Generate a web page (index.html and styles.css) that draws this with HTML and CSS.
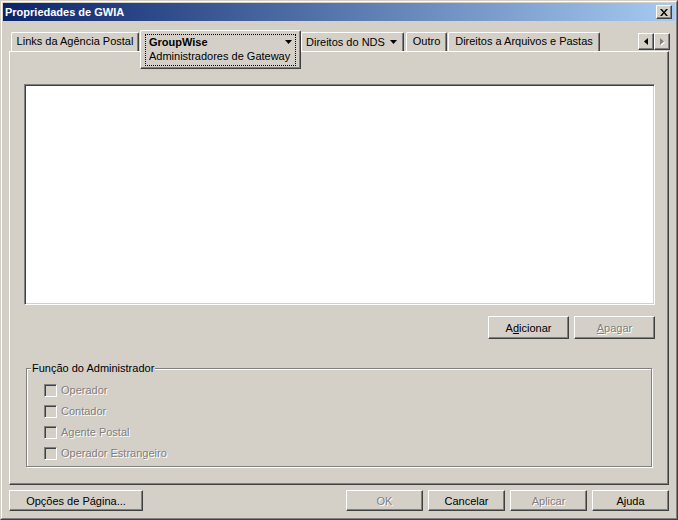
FILE: index.html
```html
<!DOCTYPE html>
<html lang="pt">
<head>
  <meta charset="UTF-8" />
  <title>Propriedades de GWIA</title>
  <link rel="stylesheet" href="styles.css">
</head>
<body>
  <div class="window">
    <div class="frame">
      <div class="titlebar">
        <span class="title">Propriedades de GWIA</span>
        <button class="close" aria-label="Fechar">
          <svg width="8" height="7" viewBox="0 0 8 7"><path d="M0 0H2L4 2.5L6 0H8L5 3.5L8 7H6L4 4.5L2 7H0L3 3.5Z" fill="#000"/></svg>
        </button>
      </div>

      <div class="tabs">
        <div class="tab tab-links">Links da Agência Postal</div>
        <div class="tab tab-active">
          <div class="focus">
            <div class="tab-head">
              <b>GroupWise</b>
              <svg class="arrow" width="7" height="4" viewBox="0 0 7 4"><polygon points="0,0 7,0 3.5,4" fill="#000"/></svg>
            </div>
            <div class="subpage">Administradores de Gateway</div>
          </div>
        </div>
        <div class="tab tab-nds">
          <span>Direitos do NDS</span>
          <svg class="arrow" width="7" height="4" viewBox="0 0 7 4"><polygon points="0,0 7,0 3.5,4" fill="#000"/></svg>
        </div>
        <div class="tab tab-outro">Outro</div>
        <div class="tab tab-dir">Direitos a Arquivos e Pastas</div>
        <div class="tab-scroll">
          <span class="scroll-btn">
            <svg width="4" height="7" viewBox="0 0 4 7"><polygon points="4,0 4,7 0,3.5" fill="#000"/></svg>
          </span>
          <span class="scroll-btn">
            <svg width="5" height="8" viewBox="0 0 5 8"><polygon points="1,1 5,4.5 1,8" fill="#fff"/><polygon points="0,0 4,3.5 0,7" fill="#808080"/></svg>
          </span>
        </div>
      </div>

      <div class="panel">
        <div class="listbox"></div>

        <div class="list-actions">
          <button class="btn">A<u>d</u>icionar</button>
          <button class="btn" disabled><u>A</u>pagar</button>
        </div>

        <fieldset class="group">
          <legend>Função do Administrador</legend>
          <div class="check"><span class="box"></span><span class="off">Operador</span></div>
          <div class="check"><span class="box"></span><span class="off">Contador</span></div>
          <div class="check"><span class="box"></span><span class="off">Agente Postal</span></div>
          <div class="check"><span class="box"></span><span class="off">Operador Estrangeiro</span></div>
        </fieldset>
      </div>

      <div class="footer">
        <button class="btn btn-page">Opções de Pá<u>g</u>ina...</button>
        <button class="btn btn-small" disabled>OK</button>
        <button class="btn btn-small">Cancelar</button>
        <button class="btn btn-small" disabled>Aplicar</button>
        <button class="btn btn-small">Ajuda</button>
      </div>
    </div>
  </div>
</body>
</html>
```

FILE: styles.css
```css
* {
  margin: 0;
  padding: 0;
  box-sizing: border-box;
}

body {
  width: 678px;
  height: 520px;
  overflow: hidden;
  background-color: #d4d0c8;
  color: #000;
  font-family: "Liberation Sans", Arial, sans-serif;
  font-size: 11px;
}

.window {
  width: 678px;
  height: 520px;
  border: 1px solid;
  border-color: #d4d0c8 #404040 #404040 #d4d0c8;
}

.frame {
  height: 100%;
  border: 1px solid;
  border-color: #fff #808080 #808080 #fff;
  padding: 1px;
  display: flex;
  flex-direction: column;
}

.titlebar {
  height: 18px;
  flex: none;
  display: flex;
  align-items: center;
  padding: 0 2px 0 2px;
  background: linear-gradient(to right, #0a246a, #a6caf0);
}

.title {
  flex: 1;
  color: #fff;
  font-weight: bold;
  line-height: 17px;
}

.close {
  width: 16px;
  height: 14px;
  display: flex;
  align-items: center;
  justify-content: center;
  background-color: #d4d0c8;
  border: 1px solid;
  border-color: #fff #404040 #404040 #fff;
  box-shadow: inset -1px -1px #808080;
  margin-right: 1px;
}

.close svg {
  display: block;
}

/* tab strip */
.tabs {
  display: flex;
  align-items: flex-start;
  height: 21px;
  flex: none;
  margin-top: 9px;
  padding: 0 5px 0 8px;
  position: relative;
  z-index: 2;
}

.tab {
  margin-top: 2px;
  height: 19px;
  border: 1px solid;
  border-bottom: 0;
  border-color: #fff #404040 #fff #fff;
  border-radius: 2px 2px 0 0;
  box-shadow: inset -1px 0 #808080;
  line-height: 16px;
  text-align: center;
  white-space: nowrap;
  background-color: #d4d0c8;
}

.tab-links {
  width: 128px;
}

.tab-active {
  width: 161px;
  height: 39px;
  margin-top: 0;
  margin-left: 1px;
  border-bottom: 1px solid #404040;
  box-shadow: inset -1px -1px #808080;
  padding: 3px 4px 2px 4px;
  line-height: 14px;
  text-align: left;
}

.focus {
  height: 100%;
  border: 1px dotted #000;
  padding: 0 3px;
}

.tab-head {
  display: flex;
  align-items: center;
  justify-content: space-between;
}

.arrow {
  display: block;
}

.tab-nds {
  width: 103px;
  display: flex;
  align-items: center;
  justify-content: space-between;
  padding: 0 6px 0 4px;
}

.tab-outro {
  width: 41px;
  margin-left: 2px;
}

.tab-dir {
  width: 152px;
  margin-left: 1px;
}

.tab-scroll {
  display: flex;
  margin-left: auto;
  margin-top: 3px;
}

.scroll-btn {
  width: 16px;
  height: 17px;
  display: flex;
  align-items: center;
  justify-content: center;
  border: 1px solid;
  border-color: #fff #404040 #404040 #fff;
  box-shadow: inset -1px -1px #808080;
}

.scroll-btn svg {
  display: block;
}

/* page */
.panel {
  height: 434px;
  flex: none;
  margin: 0 6px;
  border: 1px solid;
  border-color: #fff #404040 #404040 #fff;
  box-shadow: inset -1px -1px #808080;
  padding: 32px 13px 0 14px;
}

.listbox {
  height: 221px;
  background-color: #fff;
  border: 1px solid;
  border-color: #808080 #fff #fff #808080;
  box-shadow: inset 1px 1px #404040, inset -1px -1px #d4d0c8;
}

.list-actions {
  display: flex;
  justify-content: flex-end;
  gap: 5px;
  margin-top: 11px;
}

.btn {
  height: 23px;
  width: 81px;
  font-family: inherit;
  font-size: 11px;
  color: #000;
  background-color: #d4d0c8;
  border: 1px solid;
  border-color: #fff #404040 #404040 #fff;
  box-shadow: inset -1px -1px #808080;
}

.btn:disabled {
  color: #808080;
  text-shadow: 1px 1px 0 #fff;
}

.group {
  margin: 23px 3px 0 2px;
  border: 1px solid #808080;
  box-shadow: 1px 1px 0 #fff, inset 1px 1px 0 #fff;
  padding: 9px 0 6px 0;
}

.group legend {
  margin-left: 4px;
  padding: 0 1px;
  line-height: 13px;
  background-color: #d4d0c8;
}

.check {
  display: flex;
  align-items: center;
  gap: 4px;
  height: 13px;
  margin: 0 0 8px 17px;
}

.check:last-child {
  margin-bottom: 0;
}

.box {
  width: 13px;
  height: 13px;
  background-color: #d4d0c8;
  border: 1px solid;
  border-color: #808080 #fff #fff #808080;
  box-shadow: inset 1px 1px #404040, inset -1px -1px #d4d0c8;
}

.off {
  color: #808080;
  text-shadow: 1px 1px 0 #fff;
  line-height: 13px;
}

/* dialog buttons */
.footer {
  display: flex;
  gap: 5px;
  margin: 5px 6px 0;
}

.footer .btn {
  height: 21px;
}

.btn-page {
  width: 134px !important;
  margin-right: auto;
}

.btn-small {
  width: 77px !important;
}
```
